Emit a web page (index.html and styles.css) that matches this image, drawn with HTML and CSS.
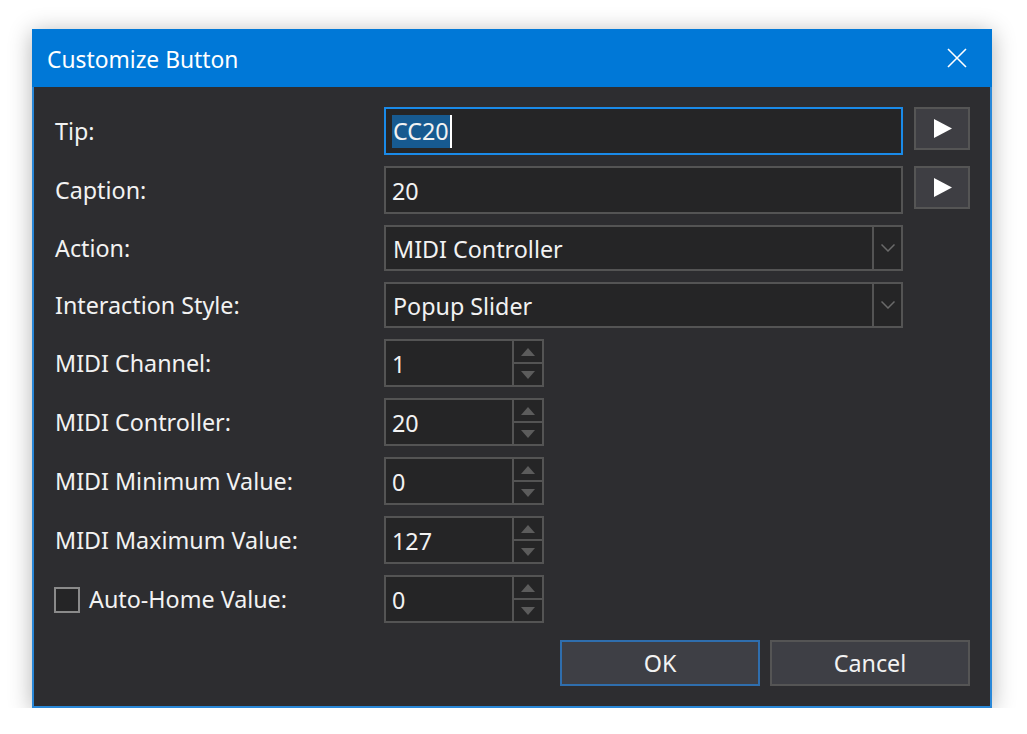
FILE: index.html
```html
<!DOCTYPE html>
<html lang="en">
<head>
<meta charset="utf-8">
<title>Customize Button</title>
<link rel="stylesheet" href="styles.css">
</head>
<body>
<div class="window">
  <div class="titlebar">
    <span class="title">Customize Button</span>
    <svg class="close" width="20" height="20" viewBox="0 0 20 20"><path d="M1 1 L19 19 M19 1 L1 19" stroke="#fff" stroke-width="1.6" fill="none"/></svg>
  </div>
  <div class="content">
    <div class="form">
      <div class="label">Tip:</div>
      <div class="input focused"><span class="sel">CC20</span><span class="caret"></span></div>
      <div class="playbtn"><svg width="18" height="19" viewBox="0 0 18 19"><path d="M0 0 L18 9.5 L0 19 Z" fill="#fff"/></svg></div>

      <div class="label">Caption:</div>
      <div class="input">20</div>
      <div class="playbtn"><svg width="18" height="19" viewBox="0 0 18 19"><path d="M0 0 L18 9.5 L0 19 Z" fill="#fff"/></svg></div>

      <div class="label">Action:</div>
      <div class="combo"><span class="combo-text">MIDI Controller</span><span class="drop"><svg width="14" height="8" viewBox="0 0 14 8"><path d="M0.5 0.5 L7 7 L13.5 0.5" stroke="#6a6a6a" stroke-width="1.5" fill="none"/></svg></span></div>
      <div></div>

      <div class="label">Interaction Style:</div>
      <div class="combo"><span class="combo-text">Popup Slider</span><span class="drop"><svg width="14" height="8" viewBox="0 0 14 8"><path d="M0.5 0.5 L7 7 L13.5 0.5" stroke="#6a6a6a" stroke-width="1.5" fill="none"/></svg></span></div>
      <div></div>

      <div class="label">MIDI Channel:</div>
      <div class="spin"><span class="spin-text">1</span><span class="spin-btns"><span class="up"></span><span class="down"></span></span></div>
      <div></div>

      <div class="label">MIDI Controller:</div>
      <div class="spin"><span class="spin-text">20</span><span class="spin-btns"><span class="up"></span><span class="down"></span></span></div>
      <div></div>

      <div class="label">MIDI Minimum Value:</div>
      <div class="spin"><span class="spin-text">0</span><span class="spin-btns"><span class="up"></span><span class="down"></span></span></div>
      <div></div>

      <div class="label">MIDI Maximum Value:</div>
      <div class="spin"><span class="spin-text">127</span><span class="spin-btns"><span class="up"></span><span class="down"></span></span></div>
      <div></div>

      <div class="label check-label"><span class="checkbox"></span><span>Auto-Home Value:</span></div>
      <div class="spin"><span class="spin-text">0</span><span class="spin-btns"><span class="up"></span><span class="down"></span></span></div>
      <div></div>
    </div>
    <div class="actions">
      <div class="btn default">OK</div>
      <div class="btn">Cancel</div>
    </div>
  </div>
</div>
</body>
</html>
```

FILE: styles.css
```css
* { box-sizing: border-box; }
html, body { margin: 0; padding: 0; }
body {
  background: #ffffff;
  font-family: "Noto Sans", "Open Sans", sans-serif;
  font-size: 23.3px;
  color: #f2f2f2;
  padding: 29px 0 0 32px;
}
.window {
  width: 960px;
  height: 679px;
  border: 2px solid #2a88d8;
  border-top: none;
  background: #2d2d30;
  box-shadow: 0 3px 22px rgba(0, 0, 0, 0.3);
  display: flex;
  flex-direction: column;
}
.titlebar {
  height: 58px;
  margin: 0 -2px;
  background: #0078d7;
  display: flex;
  align-items: center;
  justify-content: space-between;
  padding: 0 25px 0 15px;
  color: #ffffff;
}
.title { font-size: 22.8px; line-height: 1; padding-top: 4px; }
.close { display: block; }
.content {
  padding: 20px 20px 18px 21px;
  display: flex;
  flex-direction: column;
  flex: 1;
}
.form {
  display: grid;
  grid-template-columns: 318px 519px 56px;
  grid-template-rows: 48px 48px 46px 46px 48px 48px 48px 48px 48px;
  column-gap: 11px;
  row-gap: 11px;
}
.label {
  align-self: center;
  line-height: 1;
  white-space: nowrap;
  padding-top: 2px;
}
.check-label {
  display: flex;
  align-items: center;
  margin-left: -1px;
  gap: 9px;
}
.checkbox {
  width: 26px;
  height: 26px;
  border: 2px solid #8a8a8a;
  background: #252526;
  display: block;
}
.input, .combo, .spin {
  border: 2px solid #545454;
  background: #252526;
  display: flex;
  align-items: center;
}
.input { padding-left: 6px; padding-top: 1px; }
.input.focused { border-color: #1a8ae8; }
.sel {
  background: #175a90;
  line-height: 33px;
  height: 33px;
  padding: 0 1px 0 1px;
}
.caret {
  width: 2px;
  height: 33px;
  background: #ffffff;
}
.playbtn {
  height: 43px;
  align-self: start;
  background: #3e3e43;
  border: 2px solid #555555;
  display: flex;
  align-items: center;
  justify-content: center;
}
.playbtn svg { display: block; margin-left: 2px; }
.combo-text { flex: 1; padding-left: 7px; padding-top: 1px; }
.drop {
  width: 29px;
  align-self: stretch;
  border-left: 2px solid #545454;
  display: flex;
  align-items: center;
  justify-content: center;
}
.drop svg { display: block; }
.spin { width: 160px; align-items: stretch; }
.spin-text { flex: 1; padding-left: 6px; padding-top: 1px; display: flex; align-items: center; }
.spin-btns {
  width: 30px;
  border-left: 2px solid #545454;
  display: flex;
  flex-direction: column;
}
.spin-btns .up, .spin-btns .down {
  flex: 1;
  display: flex;
  align-items: center;
  justify-content: center;
}
.spin-btns .up { border-bottom: 2px solid #545454; }
.spin-btns .up::before {
  content: "";
  border-left: 7px solid transparent;
  border-right: 7px solid transparent;
  border-bottom: 8px solid #5c5c5c;
}
.spin-btns .down::before {
  content: "";
  border-left: 7px solid transparent;
  border-right: 7px solid transparent;
  border-top: 8px solid #5c5c5c;
}
.actions {
  display: flex;
  justify-content: flex-end;
  gap: 10px;
  margin-top: 17px;
}
.btn {
  width: 200px;
  height: 46px;
  background: #3e3f45;
  border: 2px solid #555555;
  display: flex;
  align-items: center;
  justify-content: center;
  line-height: 1;
  padding-top: 2px;
}
.btn.default { border-color: #2f6ead; }
```
